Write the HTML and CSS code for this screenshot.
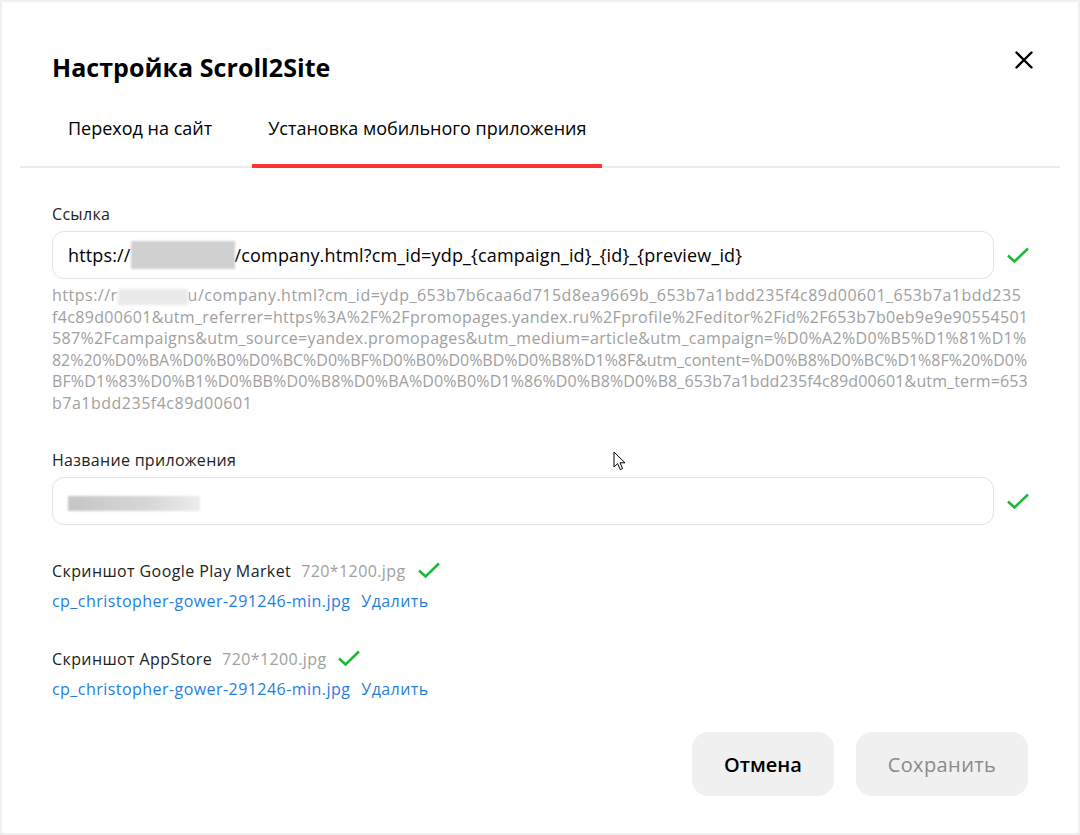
FILE: index.html
```html
<!DOCTYPE html>
<html lang="ru">
<head>
    <meta charset="UTF-8">
    <meta name="viewport" content="width=device-width, initial-scale=1.0">
    <title>Настройка Scroll2Site</title>
    <link rel="stylesheet" href="styles.css">
</head>
<body>
    <div class="modal">
        <header class="modal-head">
            <h1>Настройка Scroll2Site</h1>
            <button class="close-btn" aria-label="Закрыть">
                <svg width="18" height="18" viewBox="0 0 18 18"><path d="M1.5 1.5L16.5 16.5M16.5 1.5L1.5 16.5" stroke="#000" stroke-width="2.4" stroke-linecap="round"/></svg>
            </button>
        </header>

        <nav class="tabs">
            <div class="tab">Переход на сайт</div>
            <div class="tab active">Установка мобильного приложения</div>
        </nav>

        <main class="modal-body">
            <section class="field">
                <div class="label">Ссылка</div>
                <div class="field-row">
                    <div class="input">https://<span class="blur-box"></span>/company.html?cm_id=ydp_{campaign_id}_{id}_{preview_id}</div>
                    <svg class="check" width="24" height="18" viewBox="0 0 24 18"><path d="M2 9.5L8.5 15.5L22 2.5" fill="none" stroke="#1fb83b" stroke-width="2.6"/></svg>
                </div>
                <div class="hint">
                    <span class="l1">https://r<span class="blur-hint"></span>u/company.html?cm_id=ydp_653b7b6caa6d715d8ea9669b_653b7a1bdd235f4c89d00601_653b7a1bdd235</span>
                    <span class="l2">f4c89d00601&amp;utm_referrer=https%3A%2F%2Fpromopages.yandex.ru%2Fprofile%2Feditor%2Fid%2F653b7b0eb9e9e90554501</span>
                    <span class="l3">587%2Fcampaigns&amp;utm_source=yandex.promopages&amp;utm_medium=article&amp;utm_campaign=%D0%A2%D0%B5%D1%81%D1%</span>
                    <span class="l4">82%20%D0%BA%D0%B0%D0%BC%D0%BF%D0%B0%D0%BD%D0%B8%D1%8F&amp;utm_content=%D0%B8%D0%BC%D1%8F%20%D0%</span>
                    <span class="l5">BF%D1%83%D0%B1%D0%BB%D0%B8%D0%BA%D0%B0%D1%86%D0%B8%D0%B8_653b7a1bdd235f4c89d00601&amp;utm_term=653</span>
                    <span class="l6">b7a1bdd235f4c89d00601</span>
                </div>
            </section>

            <section class="field field-name">
                <div class="label">Название приложения</div>
                <div class="field-row">
                    <div class="input"><span class="blur-name"></span></div>
                    <svg class="check" width="24" height="18" viewBox="0 0 24 18"><path d="M2 9.5L8.5 15.5L22 2.5" fill="none" stroke="#1fb83b" stroke-width="2.6"/></svg>
                </div>
            </section>

            <section class="upload">
                <div class="upload-title">
                    Скриншот Google Play Market
                    <span class="size">720*1200.jpg</span>
                    <svg class="check-sm" width="24" height="18" viewBox="0 0 24 18"><path d="M2 9.5L8.5 15.5L22 2.5" fill="none" stroke="#1fb83b" stroke-width="2.6"/></svg>
                </div>
                <div class="upload-file">
                    <a href="#">cp_christopher-gower-291246-min.jpg</a>
                    <a href="#">Удалить</a>
                </div>
            </section>

            <section class="upload upload-second">
                <div class="upload-title">
                    Скриншот AppStore
                    <span class="size">720*1200.jpg</span>
                    <svg class="check-sm" width="24" height="18" viewBox="0 0 24 18"><path d="M2 9.5L8.5 15.5L22 2.5" fill="none" stroke="#1fb83b" stroke-width="2.6"/></svg>
                </div>
                <div class="upload-file">
                    <a href="#">cp_christopher-gower-291246-min.jpg</a>
                    <a href="#">Удалить</a>
                </div>
            </section>

            <div class="actions">
                <button class="btn btn-cancel">Отмена</button>
                <button class="btn btn-save">Сохранить</button>
            </div>
        </main>

        <svg class="cursor" width="14" height="21" viewBox="0 0 14 21"><path d="M1 1L1 16L4.6 12.6L7.2 18.6L9.6 17.6L7 11.8L12 11.8Z" fill="#fff" stroke="#000" stroke-width="1" stroke-linejoin="round"/></svg>
    </div>
</body>
</html>
```

FILE: styles.css
```css
* {
    box-sizing: border-box;
    margin: 0;
    padding: 0;
}

body {
    font-family: "Open Sans", "Noto Sans", sans-serif;
    color: #000;
    background-color: #fff;
}

.modal {
    position: relative;
    width: 1080px;
    height: 835px;
    border: 2px solid #f0f0f0;
    background-color: #fff;
    overflow: hidden;
}

.modal-head {
    display: flex;
    justify-content: space-between;
    align-items: flex-start;
    padding: 49px 45px 0 50px;
}

.modal-head h1 {
    font-size: 25px;
    font-weight: 700;
    line-height: 32px;
    letter-spacing: 0.05px;
}

.close-btn {
    background: none;
    border: none;
    width: 18px;
    height: 18px;
    margin-top: 0;
    cursor: pointer;
}

.tabs {
    display: flex;
    gap: 24px;
    margin: 20px 18px 0;
    padding-left: 32px;
    border-bottom: 2px solid #ececec;
}

.tab {
    position: relative;
    padding: 13px 16px 26px;
    font-size: 18px;
    line-height: 24px;
    color: #000;
}

.tab.active::after {
    content: "";
    position: absolute;
    left: 0;
    right: 0;
    bottom: -2px;
    height: 4px;
    background-color: #f33;
}

.modal-body {
    padding: 36px 48px 0 50px;
}

.label {
    font-size: 16px;
    line-height: 20px;
    letter-spacing: 0.3px;
    margin-bottom: 7px;
    color: #222;
}

.field-row {
    display: flex;
    align-items: center;
    gap: 12px;
}

.input {
    flex: 1;
    height: 48px;
    border: 1px solid #e3e3e3;
    border-radius: 12px;
    padding: 0 15px;
    display: flex;
    align-items: center;
    font-size: 18px;
    letter-spacing: 0.15px;
    white-space: nowrap;
}

.blur-box {
    display: inline-block;
    width: 104px;
    height: 28px;
    background-color: #d0d0d0;
    filter: blur(1px);
}

.blur-name {
    display: inline-block;
    width: 132px;
    height: 15px;
    margin-top: 4px;
    background: linear-gradient(to right, #c6c6c6, #d6d6d6 60%, #ececec);
    filter: blur(1px);
}

.check {
    flex-shrink: 0;
}

.hint {
    margin-top: 6px;
    font-size: 16px;
    line-height: 21.5px;
    color: #a0a0a0;
}

.hint span {
    display: block;
    white-space: nowrap;
}

.hint .l1 { letter-spacing: 0.5px; }
.hint .l2 { letter-spacing: 0.33px; }
.hint .l3 { letter-spacing: 0.33px; }
.hint .l4 { letter-spacing: -0.03px; }
.hint .l5 { letter-spacing: 0.12px; }
.hint .l6 { letter-spacing: 0.5px; }

.hint .blur-hint {
    display: inline-block;
    width: 70px;
    height: 16px;
    vertical-align: middle;
    background-color: #eaeaea;
    filter: blur(1.5px);
}

.field-name {
    margin-top: 36px;
}

.upload {
    margin-top: 36px;
}

.upload-second {
    margin-top: 38px;
}

.upload-title {
    display: flex;
    align-items: center;
    font-size: 16px;
    line-height: 20px;
    letter-spacing: 0.4px;
    color: #222;
}

.size {
    color: #a0a0a0;
    margin-left: 10px;
}

.check-sm {
    margin-left: 11px;
    margin-top: -3px;
}

.upload-file {
    display: flex;
    gap: 11px;
    margin-top: 10px;
    font-size: 16px;
    line-height: 20px;
    letter-spacing: 0.45px;
}

.upload-file a {
    color: #1f7ee0;
    text-decoration: none;
}

.actions {
    display: flex;
    justify-content: flex-end;
    gap: 22px;
    margin-top: 33px;
    padding-right: 2px;
}

.btn {
    height: 64px;
    padding: 0 31px;
    border: none;
    border-radius: 16px;
    background-color: #f0f0f0;
    font-family: "Open Sans", "Noto Sans", sans-serif;
    font-size: 20px;
    cursor: pointer;
}

.btn-cancel {
    font-weight: 600;
    color: #000;
    min-width: 142px;
}

.btn-save {
    color: #8a8a8a;
    letter-spacing: 0.4px;
    min-width: 172px;
}

.cursor {
    position: absolute;
    left: 611px;
    top: 449px;
}
```
